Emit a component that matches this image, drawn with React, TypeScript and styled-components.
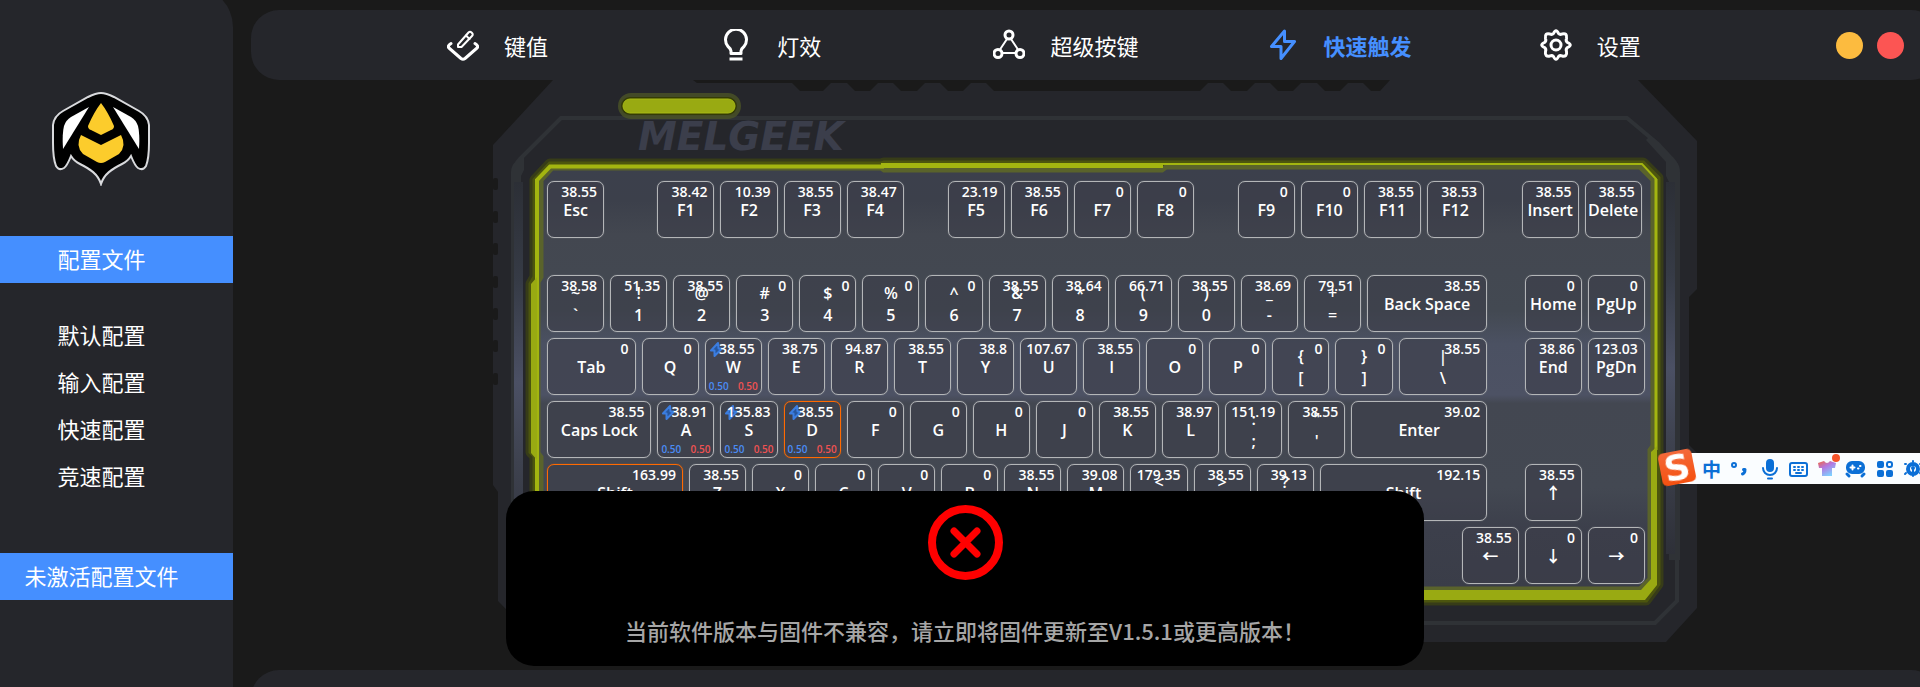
import React from "react";
import styled, { createGlobalStyle, css } from "styled-components";

const cjk = `"Noto Sans CJK SC", sans-serif`;
const latin = `"Open Sans", "Noto Sans", "Noto Sans CJK SC", sans-serif`;

const GlobalStyle = createGlobalStyle`
  * { box-sizing: border-box; }
  body {
    margin: 0;
    background: #1a1a1a;
    color: #fff;
    font-family: ${cjk};
    overflow: hidden;
  }
  button { font: inherit; color: inherit; cursor: pointer; }
`;

const Shell = styled.div`
  display: flex;
  height: 100vh;
  overflow: hidden;
`;

/* ---------- sidebar ---------- */

const Sidebar = styled.aside`
  flex: 0 0 233px;
  display: flex;
  flex-direction: column;
  margin-top: -13px;
  padding-top: 105px;
  background: #25262b;
  border-top-right-radius: 40px;
`;

const Logo = styled.svg`
  width: 98px;
  height: 94px;
  margin: 0 0 50px 52px;
`;

const sideText = css`
  height: 47px;
  margin: 0;
  padding: 0 30px 2px 0;
  font-size: 22px;
  font-weight: 400;
  line-height: 45px;
  text-align: center;
`;

const SideHeading = styled.h2`
  ${sideText}
  background: #458fff;
`;

const ProfileList = styled.ul`
  margin: 0;
  padding: 29px 0 53px;
  list-style: none;
`;

const ProfileButton = styled.button`
  ${sideText}
  display: block;
  width: 100%;
  border: 0;
  background: none;
`;

/* ---------- main column ---------- */

const Main = styled.main`
  flex: 1;
  display: flex;
  flex-direction: column;
  margin: 10px -19px 0 18px;
`;

const TopBar = styled.header`
  flex: none;
  display: flex;
  align-items: center;
  height: 70px;
  padding: 0 35px 0 196px;
  border-radius: 28px;
  background: #25262b;
`;

const Nav = styled.nav`
  flex: 1;
  display: grid;
  grid-template-columns: repeat(5, 1fr);
`;

const NavButton = styled.button<{ $active?: boolean }>`
  display: flex;
  align-items: center;
  gap: 25px;
  padding: 0;
  border: 0;
  background: none;
  font-size: 22px;
  line-height: 32px;
  font-weight: ${(p) => (p.$active ? 700 : 400)};
  color: ${(p) => (p.$active ? "#458fff" : "#fff")};

  svg {
    flex: none;
    width: 32px;
    height: 32px;
    fill: none;
    stroke: currentColor;
    stroke-width: 3;
    stroke-linecap: round;
    stroke-linejoin: round;
  }
`;

const WindowButtons = styled.div`
  display: flex;
  gap: 14px;
  margin-left: 23px;
`;

const WindowButton = styled.button<{ $color: string }>`
  width: 27px;
  height: 27px;
  padding: 0;
  border: 0;
  border-radius: 50%;
  background: ${(p) => p.$color};
`;

const BottomPanel = styled.section`
  flex: none;
  height: 160px;
  margin-top: 28px;
  border-radius: 28px;
  background: #25262b;
`;

/* ---------- keyboard ---------- */

const Keyboard = styled.section`
  flex: none;
  align-self: center;
  position: relative;
  width: 1204px;
  height: 562px;
  padding: 101px 49px 0 51px;
`;

const Case = styled.svg`
  position: absolute;
  inset: 0;
  width: 100%;
  height: 100%;
`;

const Keys = styled.div`
  position: relative;
  display: flex;
  flex-direction: column;
  gap: 6px;
`;

const KeyRow = styled.div<{ $spaced?: boolean }>`
  --unit: calc(100% / 17.5);
  display: flex;
  margin-bottom: ${(p) => (p.$spaced ? "31px" : "0")};
`;

const KeyButton = styled.button<{ $units: number; $gap: number; $selected?: boolean }>`
  position: relative;
  flex: none;
  display: flex;
  flex-direction: column;
  align-items: center;
  justify-content: center;
  width: calc(var(--unit) * ${(p) => p.$units} - 6px);
  height: 57px;
  margin: 0 3px 0 calc(var(--unit) * ${(p) => p.$gap} + 3px);
  padding: 0;
  border: 1px solid ${(p) => (p.$selected ? "#ff6a00" : "#b4b6b8")};
  border-radius: 7px;
  background: rgba(60, 62, 74, 0.6);
  box-shadow: 0 0 1px ${(p) => (p.$selected ? "#ff6a00" : "#a0a3a8")};
  font-family: ${latin};
  font-size: 16px;
  font-weight: 600;
  line-height: 22px;
  white-space: nowrap;
`;

const Travel = styled.span`
  position: absolute;
  top: 2px;
  right: 6px;
  font-size: 14px;
  line-height: 16px;
`;

const Bolt = styled.svg`
  position: absolute;
  top: 3px;
  left: 4px;
  width: 13px;
  height: 15px;
  fill: #27579f;
  stroke: #3b7de0;
  stroke-width: 2;
  stroke-linejoin: round;
`;

const Triggers = styled.span`
  position: absolute;
  right: 3px;
  bottom: 2px;
  left: 3px;
  display: flex;
  justify-content: space-between;
  font-size: 10px;
  line-height: 12px;
`;

const Press = styled.span`
  color: #4a8cf5;
`;

const Release = styled.span`
  color: #f05252;
`;

type KeyDef = {
  label: string[];
  value: string;
  units?: number;
  gap?: number;
  rapid?: boolean;
  selected?: boolean;
};

const k = (label: string, value = "0", more: Partial<KeyDef> = {}): KeyDef => ({
  label: label.split(" / "),
  value,
  ...more,
});

const rows: KeyDef[][] = [
  [
    k("Esc", "38.55"),
    k("F1", "38.42", { gap: 0.75 }), k("F2", "10.39"), k("F3", "38.55"), k("F4", "38.47"),
    k("F5", "23.19", { gap: 0.6 }), k("F6", "38.55"), k("F7"), k("F8"),
    k("F9", "0", { gap: 0.6 }), k("F10"), k("F11", "38.55"), k("F12", "38.53"),
    k("Insert", "38.55", { gap: 0.5 }), k("Delete", "38.55"),
  ],
  [
    k("~ / `", "38.58"), k("! / 1", "51.35"), k("@ / 2", "38.55"), k("# / 3"), k("$ / 4"),
    k("% / 5"), k("^ / 6"), k("& / 7", "38.55"), k("* / 8", "38.64"), k("( / 9", "66.71"),
    k(") / 0", "38.55"), k("_ / -", "38.69"), k("+ / =", "79.51"),
    k("Back Space", "38.55", { units: 2 }),
    k("Home", "0", { gap: 0.5 }), k("PgUp"),
  ],
  [
    k("Tab", "0", { units: 1.5 }), k("Q"), k("W", "38.55", { rapid: true }), k("E", "38.75"),
    k("R", "94.87"), k("T", "38.55"), k("Y", "38.8"), k("U", "107.67"), k("I", "38.55"),
    k("O"), k("P"), k("{ / ["), k("} / ]"), k("| / \\", "38.55", { units: 1.5 }),
    k("End", "38.86", { gap: 0.5 }), k("PgDn", "123.03"),
  ],
  [
    k("Caps Lock", "38.55", { units: 1.75 }), k("A", "38.91", { rapid: true }),
    k("S", "135.83", { rapid: true }), k("D", "38.55", { rapid: true, selected: true }),
    k("F"), k("G"), k("H"), k("J"), k("K", "38.55"), k("L", "38.97"),
    k(": / ;", "151.19"), k("\" / '", "38.55"), k("Enter", "39.02", { units: 2.25 }),
  ],
  [
    k("Shift", "163.99", { units: 2.25, selected: true }), k("Z", "38.55"), k("X"), k("C"),
    k("V"), k("B"), k("N", "38.55"), k("M", "39.08"), k("< / ,", "179.35"),
    k("> / .", "38.55"), k("? / /", "39.13"), k("Shift", "192.15", { units: 2.75 }),
    k("↑", "38.55", { gap: 0.5 }),
  ],
  [k("←", "38.55", { gap: 14.5 }), k("↓"), k("→")],
];

function Key({ def }: { def: KeyDef }) {
  return (
    <KeyButton type="button" $units={def.units ?? 1} $gap={def.gap ?? 0} $selected={def.selected}>
      {def.rapid && (
        <Bolt viewBox="0 0 13 15" aria-hidden="true">
          <path d="M8 1 1 8.500h3.500L4.500 14 12 6.500H8.500z" />
        </Bolt>
      )}
      {def.label.map((text) => (
        <span key={text}>{text}</span>
      ))}
      <Travel>{def.value}</Travel>
      {def.rapid && (
        <Triggers>
          <Press>0.50</Press>
          <Release>0.50</Release>
        </Triggers>
      )}
    </KeyButton>
  );
}

const panelShape =
  "M552 168H881L884 170H1162L1166 167H1640L1653 180V446L1650 450V579L1640 589H552L541 578V457L538 453V282L541 277V180Z";
const rimShape =
  "M550 164H881L884 163H1643L1658 178V584L1646 600H546L535 590V456L531 452V284L535 277V180Z";
const hullShape =
  "M553 80H693L697 83H792L800 91H823L831 83H847L855 91H870L878 83H893L901 91H917L925 83H940L948 91H963L971 83H986L994 91H1200L1208 83H1223L1231 91H1247L1255 83H1270L1278 91H1293L1301 83H1317L1325 91H1340L1348 83H1363L1371 91H1380L1390 80H1638L1698 142V288L1689 297V445L1698 454V607L1666 642H538L498 601V492L493 485V145Z";
const teeth = [178, 211, 243, 276, 308, 340, 373];

function CaseDrawing() {
  return (
    <Case viewBox="493 80 1204 562" aria-hidden="true">
      <defs>
        <linearGradient id="plate" x1="0" y1="0" x2="0" y2="1">
          <stop offset="0" stopColor="#3c404c" />
          <stop offset="0.08" stopColor="#3c404b" />
          <stop offset="0.16" stopColor="#434750" />
          <stop offset="0.34" stopColor="#434952" />
          <stop offset="0.42" stopColor="#4b5162" />
          <stop offset="0.54" stopColor="#4d5264" />
          <stop offset="0.56" stopColor="#434751" />
          <stop offset="0.76" stopColor="#434852" />
          <stop offset="0.86" stopColor="#3c3f4b" />
          <stop offset="1" stopColor="#3a3d48" />
        </linearGradient>
        <linearGradient id="strip" x1="0" y1="0" x2="0" y2="1">
          <stop offset="0" stopColor="#2c2f36" />
          <stop offset="0.25" stopColor="#363b46" />
          <stop offset="0.5" stopColor="#4b5064" />
          <stop offset="0.7" stopColor="#3e424f" />
          <stop offset="1" stopColor="#2e3038" />
        </linearGradient>
      </defs>
      <path d={hullShape} fill="#25262b" />
      {teeth.map((y) => (
        <rect key={y} x="493" y={y} width="5" height="12" rx="2" fill="#1a1a1a" />
      ))}
      <path
        d="M1655 623 1677 601V172Q1677 164 1672 159L1658 144 1627 118H561L520 159Q515 164 515 172V600L537 623Z"
        fill="none"
        stroke="#2f3236"
        strokeWidth="4"
      />
      <path d="M511 172Q511 166 516 161L524 154V170L521 176V560H511Z" fill="#2f3236" />
      <path d="M1680 172Q1680 165 1675 160L1650 136 1646 140 1666 162V176L1669 182V560H1680Z" fill="#2f3236" />
      <rect x="514" y="182" width="9" height="400" fill="url(#strip)" />
      <rect x="1666" y="182" width="9" height="372" fill="url(#strip)" />
      <path d={rimShape} fill="none" stroke="#3f4611" strokeWidth="11" strokeLinejoin="round" opacity="0.7" />
      <path d={rimShape} fill="#353b0c" stroke="#4c550e" strokeWidth="5" />
      <path d={panelShape} fill="url(#plate)" stroke="#5a632b" strokeWidth="5" />
      <g fill="none" stroke="#a3b510" strokeLinejoin="miter">
        <path d="M537 590V180L550 166.500H884" strokeWidth="4" />
        <path d="M881 165.500H1163" strokeWidth="5" />
        <path d="M1160 164H1642L1656 179V450" strokeWidth="2" />
        <path d="M1656 179V450" strokeWidth="3" />
      </g>
      <path d="M531 284 537 277V460L531 453Z" fill="#99aa12" />
      <path d="M1651 452 1657 446V585L1645 600H547L535 590V579L548 590H1641L1651 579Z" fill="#99aa12" />
      <rect x="618" y="93" width="123" height="26" rx="13" fill="#4b5427" opacity="0.8" />
      <rect x="621" y="97" width="116" height="18" rx="9" fill="#343b07" />
      <rect x="623" y="99" width="112" height="14" rx="7" fill="#99aa12" stroke="#a8ba14" />
      <text
        x="638"
        y="150"
        fill="#3b3e4b"
        fontFamily="DejaVu Sans, sans-serif"
        fontSize="39"
        fontWeight="700"
        fontStyle="italic"
      >
        MELGEEK
      </text>
    </Case>
  );
}

/* ---------- firmware notice ---------- */

const NoticeLayer = styled.div`
  position: fixed;
  right: -10px;
  bottom: 21px;
  left: 0;
  display: flex;
  justify-content: center;
`;

const Notice = styled.div`
  display: flex;
  flex-direction: column;
  align-items: center;
  gap: 34px;
  width: 918px;
  height: 175px;
  padding-top: 14px;
  border-radius: 28px;
  background: #000;

  svg {
    width: 75px;
    height: 75px;
    fill: none;
    stroke: #f00;
    stroke-width: 8;
    stroke-linecap: round;
  }

  p {
    margin: 0;
    font-size: 22px;
    font-weight: 500;
    line-height: 32px;
    color: #a6a6a6;
  }
`;

/* ---------- input method bar ---------- */

const ImeBar = styled.div`
  position: fixed;
  top: 453px;
  right: -9px;
  display: flex;
  align-items: center;
  height: 31px;
  padding-left: 39px;
`;

const ImeTools = styled.div`
  display: flex;
  margin-left: -20px;
  padding-left: 20px;
  background: #fafdff;
  color: #0b6fd6;
`;

const ImeLogo = styled.span`
  position: absolute;
  top: -2px;
  left: 2px;
  width: 34px;
  height: 33px;
  border-radius: 5px;
  background: linear-gradient(#f4693a, #f5500f);
  color: #fff;
  font: 700 36px/33px "DejaVu Sans", sans-serif;
  text-align: center;
  transform: rotate(-11deg);
`;

const ImeButton = styled.button`
  display: flex;
  align-items: center;
  justify-content: center;
  width: 29px;
  height: 31px;
  padding: 0;
  border: 0;
  background: none;
  font-size: 19px;
  font-weight: 700;
  line-height: 28px;

  svg {
    width: 22px;
    height: 22px;
    overflow: visible;
    fill: none;
    stroke: currentColor;
    stroke-width: 2;
    stroke-linecap: round;
    stroke-linejoin: round;
  }
`;

const navItems = [
  {
    name: "键值",
    icon: (
      <>
        <path d="M4 14.500Q0 17 2 19L14 29.500Q16 31 18 29.500L30 19Q32 17 28 14.500" />
        <path d="M11 15.500 21.500 3.500Q23 2 24.500 3.500L25 4Q26.500 5.500 25 7L14.500 18H11Z" strokeWidth="2" />
        <path d="M19 6.500 22.500 10" strokeWidth="2" />
      </>
    ),
  },
  {
    name: "灯效",
    icon: (
      <>
        <path d="M11 24.500V22Q10.500 19.500 8 17.500A10.500 10.500 0 1 1 24 17.500Q21.500 19.500 21 22V24.500Z" />
        <path d="M11 30H21" strokeLinecap="square" />
      </>
    ),
  },
  {
    name: "超级按键",
    icon: (
      <>
        <circle cx="16" cy="6" r="4" />
        <circle cx="5" cy="24.500" r="4" />
        <circle cx="27" cy="24.500" r="4" />
        <path d="M14 10 7 20.500M18 10 25 20.500M9 24H23" strokeWidth="2" />
      </>
    ),
  },
  {
    name: "快速触发",
    active: true,
    icon: <path d="M17.500 2 4.500 17.500H14V29.500L27.500 12.500H17.500Z" />,
  },
  {
    name: "设置",
    icon: (
      <>
        <path d="M13.500 4.500Q16 -1 18.500 4.500Q20 6 22 5Q27.500 3.500 26.500 9.500Q25.500 12 27.500 13.500Q33 16 27.500 18.500Q25.500 20 26.500 22.500Q27.500 28 22 27Q20 26 18.500 27.500Q16 33 13.500 27.500Q12 26 10 27Q4.500 28 5.500 22.500Q6.500 20 4.500 18.500Q-1 16 4.500 13.500Q6.500 12 5.500 9.500Q4.500 3.500 10 5Q12 6 13.500 4.500Z" />
        <circle cx="16" cy="16" r="5" />
      </>
    ),
  },
];

const profiles = ["默认配置", "输入配置", "快速配置", "竞速配置"];

const imeItems = [
  { name: "标点", icon: <><circle cx="4" cy="7" r="2" /><path d="M13.500 11.500h1.500Q15 15 12.500 16" strokeWidth="3" /></> },
  { name: "语音", icon: <><rect x="8" y="2" width="6" height="11" rx="3" fill="currentColor" /><path d="M4 10a7 7 0 0 0 14 0M9 20.500H13" /></> },
  { name: "键盘", icon: <><rect x="2" y="5" width="17" height="13" rx="2" /><path d="M6 9h1M10 9h1M14 9h1M6 12h1M10 12h1M14 12h1M8 15h5" /></> },
  {
    name: "皮肤",
    icon: (
      <>
        <defs>
          <linearGradient id="shirt" x1="0" y1="0" x2="0.6" y2="1">
            <stop offset="0" stopColor="#f4643c" />
            <stop offset="0.45" stopColor="#b377e0" />
            <stop offset="1" stopColor="#7fd0ff" />
          </linearGradient>
        </defs>
        <path d="M1 5 7 3Q10 7 13 3L19 5 18 10 15 10V18H5V10L2 10Z" fill="url(#shirt)" stroke="none" />
        <circle cx="19" cy="0" r="4" fill="#f4532a" stroke="none" />
      </>
    ),
  },
  {
    name: "游戏",
    icon: (
      <>
        <rect x="1" y="4" width="17" height="11" rx="5" fill="currentColor" />
        <path d="M1 16 3 18M18 16 16 18" strokeWidth="3" />
        <path d="M4.500 9.500H8.500M6.500 7.500V11.500M12 10.500H12.500M14 8H14.500" stroke="#fff" />
      </>
    ),
  },
  {
    name: "工具箱",
    icon: (
      <>
        <rect x="3" y="4" width="5" height="5" rx="1" fill="currentColor" />
        <rect x="12" y="4" width="5" height="5" rx="2" />
        <rect x="3" y="13" width="5" height="5" rx="1" fill="currentColor" />
        <rect x="12" y="13" width="5" height="5" rx="1" fill="currentColor" />
      </>
    ),
  },
  {
    name: "设置",
    icon: (
      <>
        <circle cx="9" cy="11" r="5" strokeWidth="4" />
        <circle cx="9" cy="10" r="1" fill="currentColor" />
        <path d="M9 11V18M9 3.500V3M2 6 1 6M16 6 17 6M2 15 1 16M16 15 17 16" />
      </>
    ),
  },
];

export default function App() {
  return (
    <>
      <GlobalStyle />
      <Shell>
        <Sidebar>
          <Logo viewBox="0 0 98 94" aria-label="MelGeek" role="img">
            <path
              d="M49 1C54 1 58 3 62 5L87 19Q96 24 97 33V51C97 62 96 69 94 74Q91 79 86 76C83 74 81 69 79 64Q76 69 70 72C60 77 52 82 49 92C46 82 38 77 28 72Q22 69 19 64C17 69 15 74 12 76Q7 79 4 74C2 69 1 62 1 51V33Q2 24 11 19L36 5C40 3 44 1 49 1Z"
              fill="#000"
              stroke="#d9dadd"
              strokeWidth="2"
            />
            <path d="M49 11Q56 20 62 34Q62 37 59 38L49 43 39 38Q36 37 36 34Q42 20 49 11Z" fill="#fccc2c" />
            <path d="M29 43 49 53 69 43Q75 54 67 62L53 70Q49 72 45 70L31 62Q23 54 29 43Z" fill="#fccc2c" />
            <path d="M37 15 11 57Q10 42 12 34Q14 28 19 25Z" fill="#fff" />
            <path d="M61 15 87 57Q88 42 86 34Q84 28 79 25Z" fill="#fff" />
          </Logo>
          <SideHeading>配置文件</SideHeading>
          <ProfileList>
            {profiles.map((name) => (
              <li key={name}>
                <ProfileButton type="button">{name}</ProfileButton>
              </li>
            ))}
          </ProfileList>
          <SideHeading>未激活配置文件</SideHeading>
        </Sidebar>
        <Main>
          <TopBar>
            <Nav>
              {navItems.map((item) => (
                <NavButton key={item.name} type="button" $active={item.active}>
                  <svg viewBox="0 0 32 32" aria-hidden="true">{item.icon}</svg>
                  {item.name}
                </NavButton>
              ))}
            </Nav>
            <WindowButtons>
              <WindowButton type="button" aria-label="最小化" $color="#fcbb3f" />
              <WindowButton type="button" aria-label="关闭" $color="#fc5553" />
            </WindowButtons>
          </TopBar>
          <Keyboard>
            <CaseDrawing />
            <Keys>
              {rows.map((row, i) => (
                <KeyRow key={i} $spaced={i === 0}>
                  {row.map((def, j) => (
                    <Key key={j} def={def} />
                  ))}
                </KeyRow>
              ))}
            </Keys>
          </Keyboard>
          <BottomPanel />
        </Main>
      </Shell>
      <NoticeLayer>
        <Notice role="alert">
          <svg viewBox="0 0 75 75" aria-hidden="true">
            <circle cx="37.500" cy="37.500" r="33.500" />
            <path d="M26 26 49 49M49 26 26 49" strokeWidth="7" />
          </svg>
          <p>当前软件版本与固件不兼容，请立即将固件更新至V1.5.1或更高版本！</p>
        </Notice>
      </NoticeLayer>
      <ImeBar>
        <ImeTools>
          <ImeButton type="button">中</ImeButton>
          {imeItems.map((item) => (
            <ImeButton key={item.name} type="button" aria-label={item.name}>
              <svg viewBox="0 0 22 22" aria-hidden="true">{item.icon}</svg>
            </ImeButton>
          ))}
        </ImeTools>
        <ImeLogo>S</ImeLogo>
      </ImeBar>
    </>
  );
}
